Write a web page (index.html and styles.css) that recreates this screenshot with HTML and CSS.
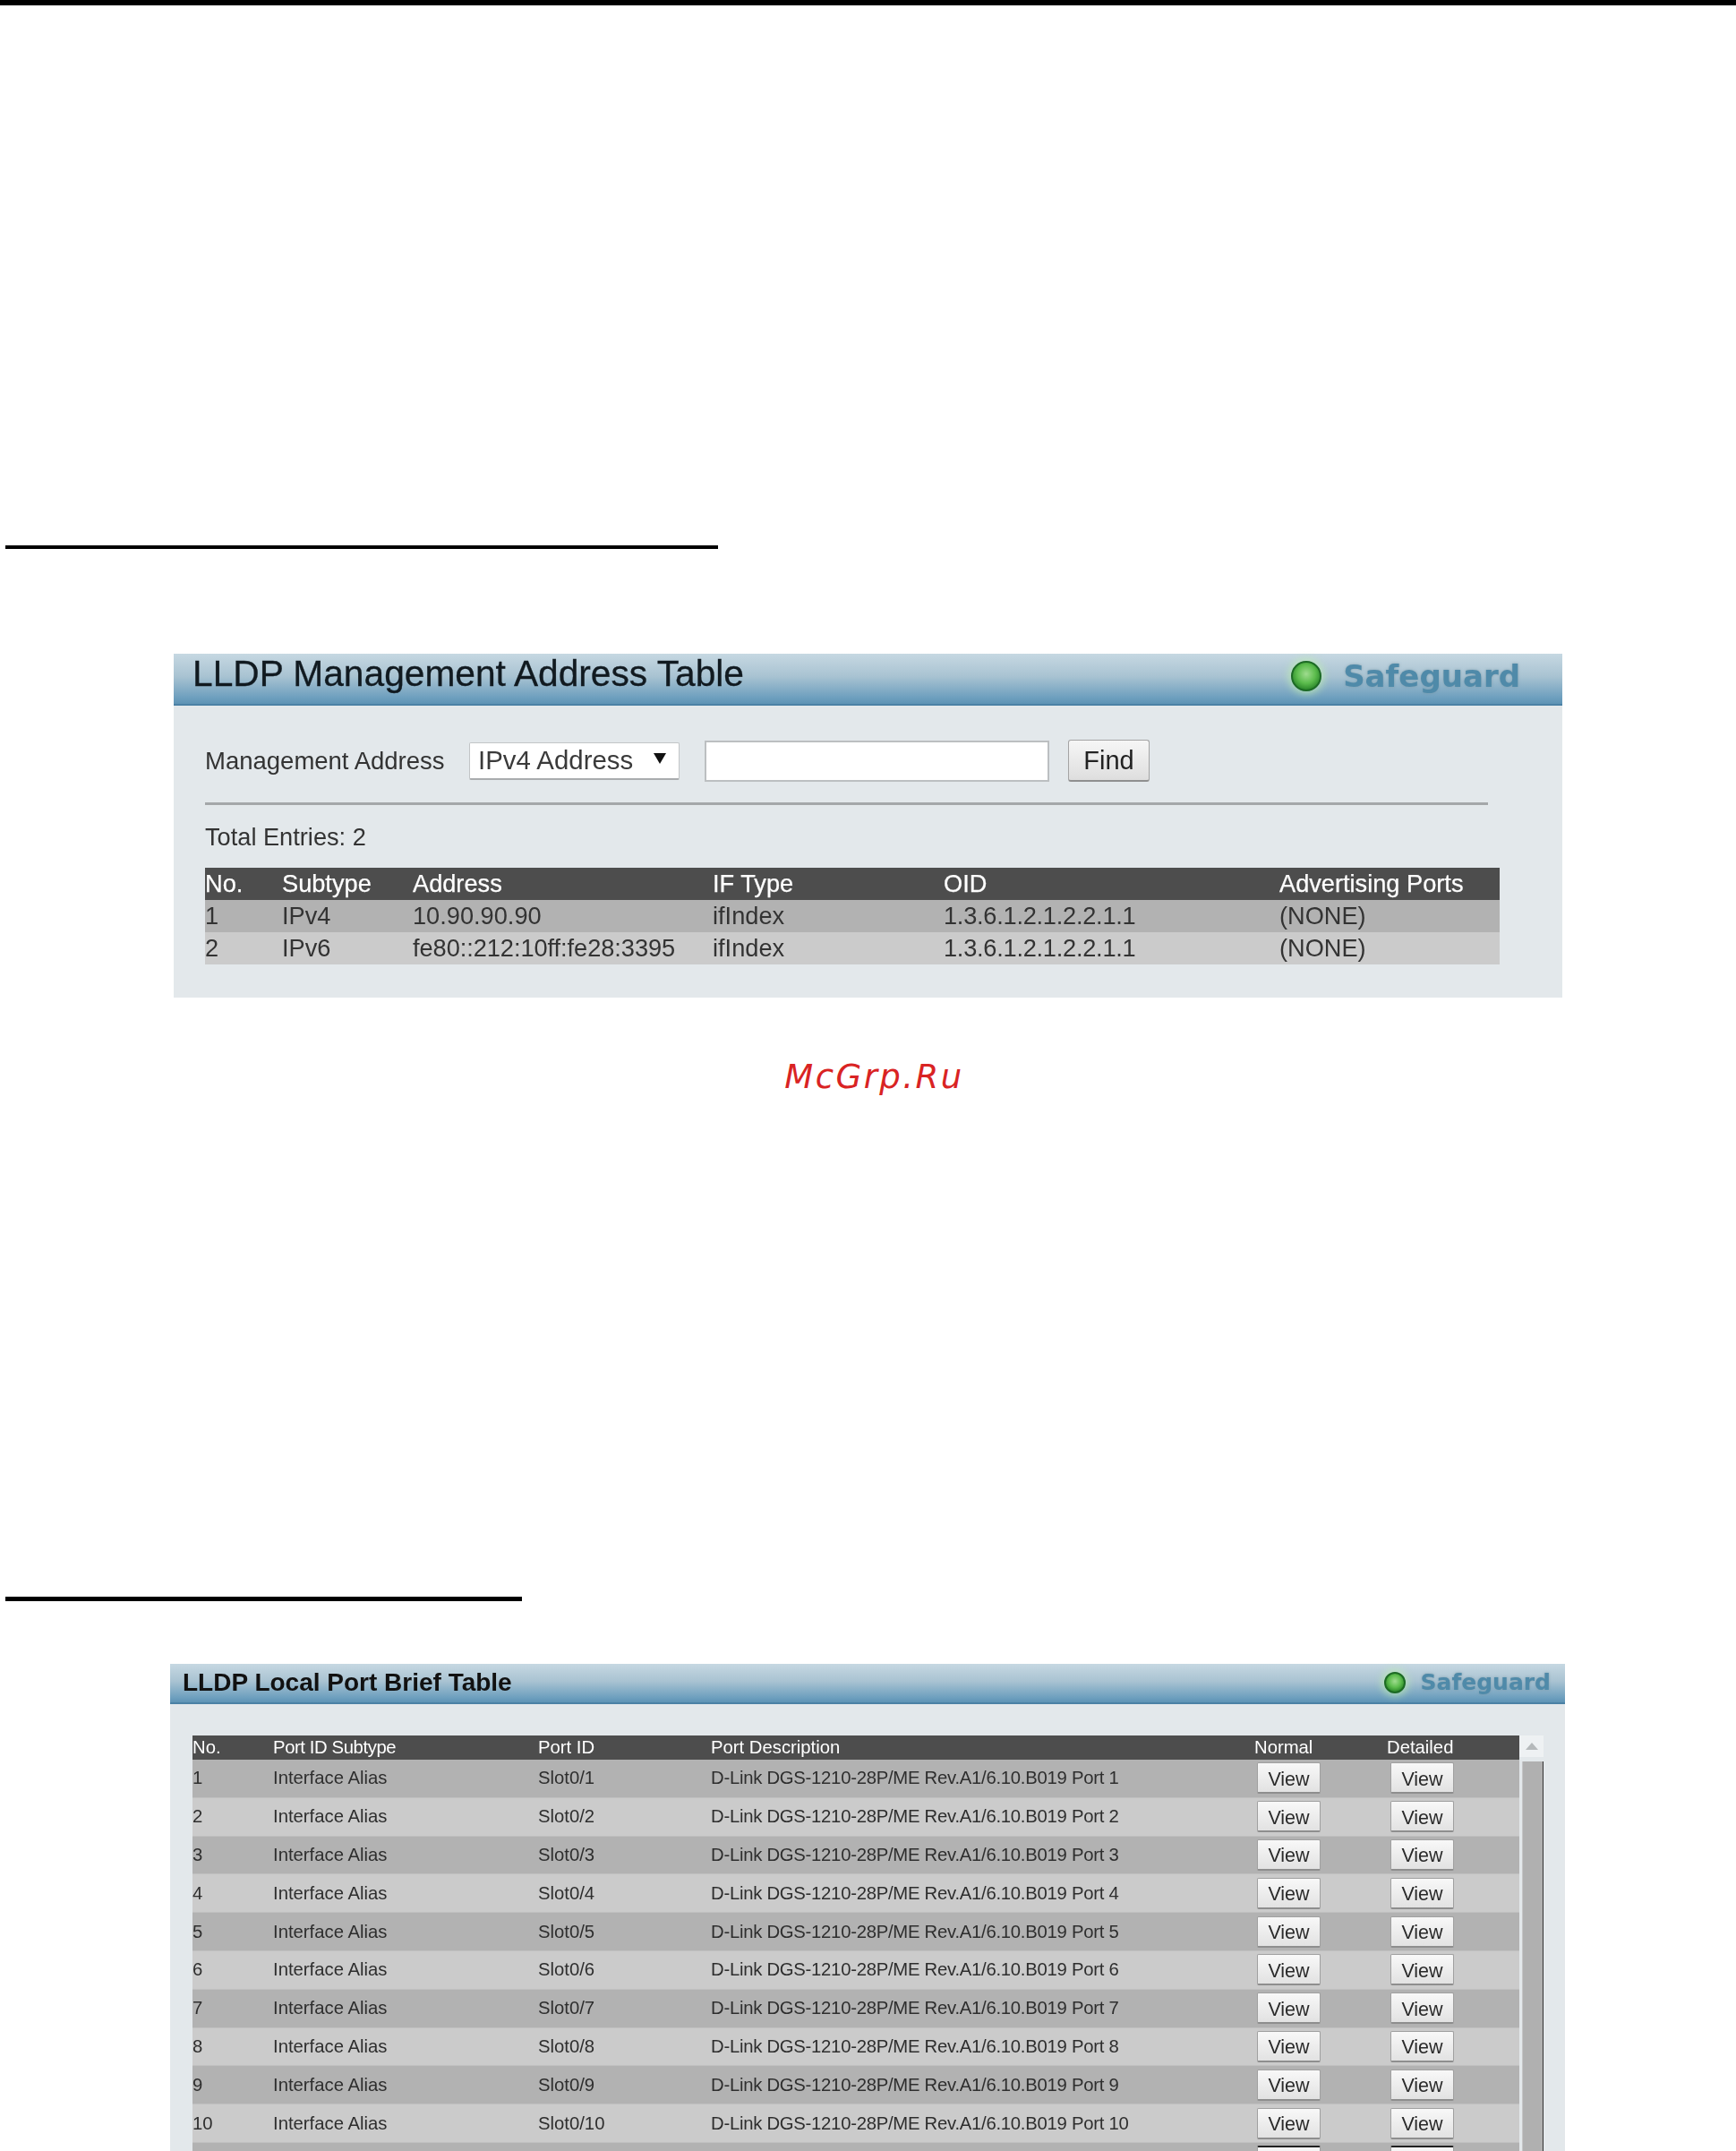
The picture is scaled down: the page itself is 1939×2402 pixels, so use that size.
FILE: index.html
```html
<!DOCTYPE html>
<html lang="en">
<head>
<meta charset="utf-8">
<title>LLDP tables</title>
<link rel="stylesheet" href="styles.css">
</head>
<body>
<div class="top-bar"></div>
<div class="rule rule-first"></div>

<section class="panel panel-mgmt">
  <header class="panel-head head-mgmt">
    <h1 class="title-mgmt">LLDP Management Address Table</h1>
    <div class="guard guard-large"><span class="led led-large"></span><span class="guard-text">Safeguard</span></div>
  </header>
  <div class="mgmt-body">
    <form class="toolbar">
      <label class="tool-label">Management Address</label>
      <div class="select-box"><span>IPv4 Address</span><svg class="select-arrow" width="14" height="12" viewBox="0 0 14 12"><path d="M0 0H14L7 12Z"/></svg></div>
      <input class="find-input" type="text">
      <button class="find-btn" type="button">Find</button>
    </form>
    <div class="divider"></div>
    <p class="total">Total Entries: 2</p>
    <div class="mgmt-table">
      <div class="mgmt-row mgmt-headrow"><span>No.</span><span>Subtype</span><span>Address</span><span>IF Type</span><span>OID</span><span>Advertising Ports</span></div>
      <div class="mgmt-row shade-dark"><span>1</span><span>IPv4</span><span>10.90.90.90</span><span>ifIndex</span><span class="tight">1.3.6.1.2.1.2.2.1.1</span><span>(NONE)</span></div>
      <div class="mgmt-row shade-light"><span>2</span><span>IPv6</span><span class="addr">fe80::212:10ff:fe28:3395</span><span>ifIndex</span><span class="tight">1.3.6.1.2.1.2.2.1.1</span><span>(NONE)</span></div>
    </div>
  </div>
</section>

<div class="watermark">McGrp.Ru</div>

<div class="rule rule-second"></div>

<section class="panel panel-ports">
  <header class="panel-head head-ports">
    <h2 class="title-ports">LLDP Local Port Brief Table</h2>
    <div class="guard guard-small"><span class="led led-small"></span><span class="guard-text">Safeguard</span></div>
  </header>
  <div class="ports-body">
    <div class="ports-table">
      <div class="port-row port-headrow"><span>No.</span><span class="head-tight">Port ID Subtype</span><span>Port ID</span><span>Port Description</span><span>Normal</span><span>Detailed</span></div>
      <div class="port-row shade-dark"><span>1</span><span>Interface Alias</span><span>Slot0/1</span><span class="desc">D-Link DGS-1210-28P/ME Rev.A1/6.10.B019 Port 1</span><span class="cell-btn"><button class="view" type="button">View</button></span><span class="cell-btn cell-btn-b"><button class="view" type="button">View</button></span></div>
      <div class="port-row shade-light"><span>2</span><span>Interface Alias</span><span>Slot0/2</span><span class="desc">D-Link DGS-1210-28P/ME Rev.A1/6.10.B019 Port 2</span><span class="cell-btn"><button class="view" type="button">View</button></span><span class="cell-btn cell-btn-b"><button class="view" type="button">View</button></span></div>
      <div class="port-row shade-dark"><span>3</span><span>Interface Alias</span><span>Slot0/3</span><span class="desc">D-Link DGS-1210-28P/ME Rev.A1/6.10.B019 Port 3</span><span class="cell-btn"><button class="view" type="button">View</button></span><span class="cell-btn cell-btn-b"><button class="view" type="button">View</button></span></div>
      <div class="port-row shade-light"><span>4</span><span>Interface Alias</span><span>Slot0/4</span><span class="desc">D-Link DGS-1210-28P/ME Rev.A1/6.10.B019 Port 4</span><span class="cell-btn"><button class="view" type="button">View</button></span><span class="cell-btn cell-btn-b"><button class="view" type="button">View</button></span></div>
      <div class="port-row shade-dark"><span>5</span><span>Interface Alias</span><span>Slot0/5</span><span class="desc">D-Link DGS-1210-28P/ME Rev.A1/6.10.B019 Port 5</span><span class="cell-btn"><button class="view" type="button">View</button></span><span class="cell-btn cell-btn-b"><button class="view" type="button">View</button></span></div>
      <div class="port-row shade-light"><span>6</span><span>Interface Alias</span><span>Slot0/6</span><span class="desc">D-Link DGS-1210-28P/ME Rev.A1/6.10.B019 Port 6</span><span class="cell-btn"><button class="view" type="button">View</button></span><span class="cell-btn cell-btn-b"><button class="view" type="button">View</button></span></div>
      <div class="port-row shade-dark"><span>7</span><span>Interface Alias</span><span>Slot0/7</span><span class="desc">D-Link DGS-1210-28P/ME Rev.A1/6.10.B019 Port 7</span><span class="cell-btn"><button class="view" type="button">View</button></span><span class="cell-btn cell-btn-b"><button class="view" type="button">View</button></span></div>
      <div class="port-row shade-light"><span>8</span><span>Interface Alias</span><span>Slot0/8</span><span class="desc">D-Link DGS-1210-28P/ME Rev.A1/6.10.B019 Port 8</span><span class="cell-btn"><button class="view" type="button">View</button></span><span class="cell-btn cell-btn-b"><button class="view" type="button">View</button></span></div>
      <div class="port-row shade-dark"><span>9</span><span>Interface Alias</span><span>Slot0/9</span><span class="desc">D-Link DGS-1210-28P/ME Rev.A1/6.10.B019 Port 9</span><span class="cell-btn"><button class="view" type="button">View</button></span><span class="cell-btn cell-btn-b"><button class="view" type="button">View</button></span></div>
      <div class="port-row shade-light"><span>10</span><span>Interface Alias</span><span>Slot0/10</span><span class="desc">D-Link DGS-1210-28P/ME Rev.A1/6.10.B019 Port 10</span><span class="cell-btn"><button class="view" type="button">View</button></span><span class="cell-btn cell-btn-b"><button class="view" type="button">View</button></span></div>
      <div class="port-row shade-dark"><span></span><span></span><span></span><span></span><span class="cell-btn"><button class="view view-edge" type="button"></button></span><span class="cell-btn cell-btn-b"><button class="view view-edge" type="button"></button></span></div>
    </div>
    <div class="scrollbar">
      <div class="scroll-up"><svg width="14" height="8" viewBox="0 0 14 8"><path d="M7 0L14 8H0Z"/></svg></div>
      <div class="scroll-thumb"></div>
    </div>
  </div>
</section>
</body>
</html>
```
FILE: styles.css
```css
html, body {
  margin: 0;
  height: 2402px;
  overflow: hidden;
  background: #fff;
}

body {
  font-family: "Liberation Sans", Arial, sans-serif;
  color: #333;
}

.top-bar {
  height: 6px;
  background: #000;
}

.rule {
  margin-left: 6px;
  background: #000;
}

.rule-first {
  width: 796px;
  height: 4px;
  margin-top: 603px;
}

.rule-second {
  width: 577px;
  height: 5px;
  margin-top: 558px;
}

.panel {
  background: #e3e8eb;
  filter: blur(0.5px);
}

.panel-mgmt {
  width: 1551px;
  height: 384px;
  margin: 117px 0 0 194px;
}

.panel-ports {
  width: 1558px;
  height: 600px;
  margin: 70px 0 0 190px;
}

.panel-head {
  display: flex;
  align-items: center;
  box-sizing: border-box;
  background: linear-gradient(#c6d8e2 0%, #a9c3d2 45%, #6d9fbe 88%, #5e93b5 100%);
  border-bottom: 2px solid #4b81a5;
}

.head-mgmt {
  height: 58px;
  padding: 0 47px 12px 21px;
}

.head-ports {
  height: 45px;
  padding: 0 16px 2px 14px;
}

.title-mgmt {
  flex: 1;
  margin: 0;
  font-size: 40.7px;
  font-weight: 400;
  color: #111a20;
  -webkit-text-stroke: 0.3px #111a20;
}

.title-ports {
  flex: 1;
  margin: 0;
  font-size: 28px;
  font-weight: 700;
  color: #111;
}

.guard {
  display: flex;
  align-items: center;
}

.guard-text {
  font-family: "DejaVu Sans", sans-serif;
  font-weight: 700;
  color: #4f8aa9;
  text-shadow: 0 0 3px rgba(120, 150, 165, 0.8);
}

.guard-large {
  gap: 24px;
  margin-top: 6px;
}

.guard-large .guard-text {
  font-size: 34px;
}

.guard-small {
  gap: 17px;
  margin-top: 0;
}

.guard-small .guard-text {
  font-size: 25px;
}

.led {
  display: block;
  border-radius: 50%;
  background: radial-gradient(circle at 50% 42%, #9fdc8f 0%, #5cbc4d 45%, #1f7a22 85%);
  border: 2px solid #1d6b24;
  box-sizing: border-box;
  box-shadow: 0 0 9px 3px rgba(190, 235, 180, 0.75);
}

.led-large {
  width: 34px;
  height: 34px;
}

.led-small {
  width: 24px;
  height: 24px;
}

.mgmt-body {
  padding: 38px 0 0 35px;
}

.toolbar {
  display: flex;
  align-items: center;
  height: 47px;
}

.tool-label {
  width: 295px;
  font-size: 27.5px;
}

.select-box {
  display: flex;
  align-items: center;
  justify-content: space-between;
  box-sizing: border-box;
  width: 235px;
  height: 42px;
  padding: 0 14px 0 9px;
  background: #fff;
  border: 1px solid #c2c5c7;
  border-bottom: 2px solid #a9acae;
  border-radius: 2px;
  font-size: 29.4px;
  color: #3a3a3a;
}

.select-arrow {
  margin-bottom: 4px;
  fill: #111;
}

.find-input {
  box-sizing: border-box;
  width: 385px;
  height: 46px;
  margin-left: 28px;
  padding: 0;
  background: #fff;
  border: 2px solid #bcbfc1;
  outline: none;
}

.find-btn {
  box-sizing: border-box;
  width: 91px;
  height: 47px;
  margin-left: 21px;
  padding: 0;
  background: linear-gradient(#f6f6f6, #dedede);
  border: 1px solid #a4a4a4;
  border-bottom: 2px solid #8f8f8f;
  border-radius: 3px;
  font-family: inherit;
  font-size: 29px;
  color: #222;
}

.divider {
  width: 1433px;
  height: 3px;
  margin-top: 23px;
  background: #a4a7a9;
}

.total {
  margin: 20px 0 0;
  font-size: 27.2px;
  line-height: 32px;
}

.mgmt-table {
  width: 1446px;
  margin-top: 18px;
}

.mgmt-row {
  display: grid;
  grid-template-columns: 86px 146px 335px 258px 375px 246px;
  align-items: center;
  height: 36px;
  font-size: 27.2px;
  white-space: nowrap;
}

.mgmt-headrow {
  background: #4d4d4d;
  color: #fff;
  -webkit-text-stroke: 0.25px #fff;
}

.tight {
  letter-spacing: -0.25px;
}

.addr {
  letter-spacing: -0.05px;
}

.shade-dark {
  background: #b2b2b2;
}

.shade-light {
  background: #cbcbcb;
}

.ports-body {
  display: flex;
  align-items: flex-start;
  padding: 35px 0 0 25px;
}

.ports-table {
  width: 1482px;
}

.port-row {
  display: grid;
  grid-template-columns: 90px 296px 193px 607px 148px 148px;
  align-items: center;
  box-sizing: border-box;
  height: 42.8px;
  border-bottom: 1px solid #c0c0c0;
  font-size: 20.3px;
  white-space: nowrap;
  color: #2e2e2e;
}

.port-headrow {
  height: 27px;
  background: #4d4d4d;
  border-bottom: 0;
  color: #fff;
}

.head-tight {
  letter-spacing: -0.4px;
}

.desc {
  letter-spacing: -0.26px;
}

.cell-btn {
  display: flex;
  padding-left: 3px;
}

.cell-btn-b {
  padding-left: 4px;
}

.view {
  box-sizing: border-box;
  width: 71px;
  height: 35px;
  padding: 4px 0 0;
  background: linear-gradient(#f8f8f8, #e2e2e2);
  border: 1px solid #a0a0a0;
  border-bottom: 2px solid #8e8e8e;
  border-radius: 2px;
  font-family: inherit;
  font-size: 21.5px;
  color: #2a2a2a;
}

.view-edge {
  border-top: 2px solid #222;
}

.scrollbar {
  display: flex;
  flex-direction: column;
  width: 27px;
}

.scroll-up {
  display: flex;
  align-items: center;
  justify-content: center;
  height: 24px;
  background: #eef1f3;
}

.scroll-up svg {
  fill: #b5b9bb;
}

.scroll-thumb {
  box-sizing: border-box;
  height: 440px;
  margin: 5px 0 0 3px;
  background: #b0b0b0;
  border-left: 1px solid #c6c6c6;
  border-right: 1px solid #333;
}

.watermark {
  margin-top: 67px;
  padding-left: 14px;
  text-align: center;
  font-family: "DejaVu Sans", sans-serif;
  font-style: italic;
  font-size: 37px;
  line-height: 44px;
  letter-spacing: 2.5px;
  color: #d92323;
}
```
